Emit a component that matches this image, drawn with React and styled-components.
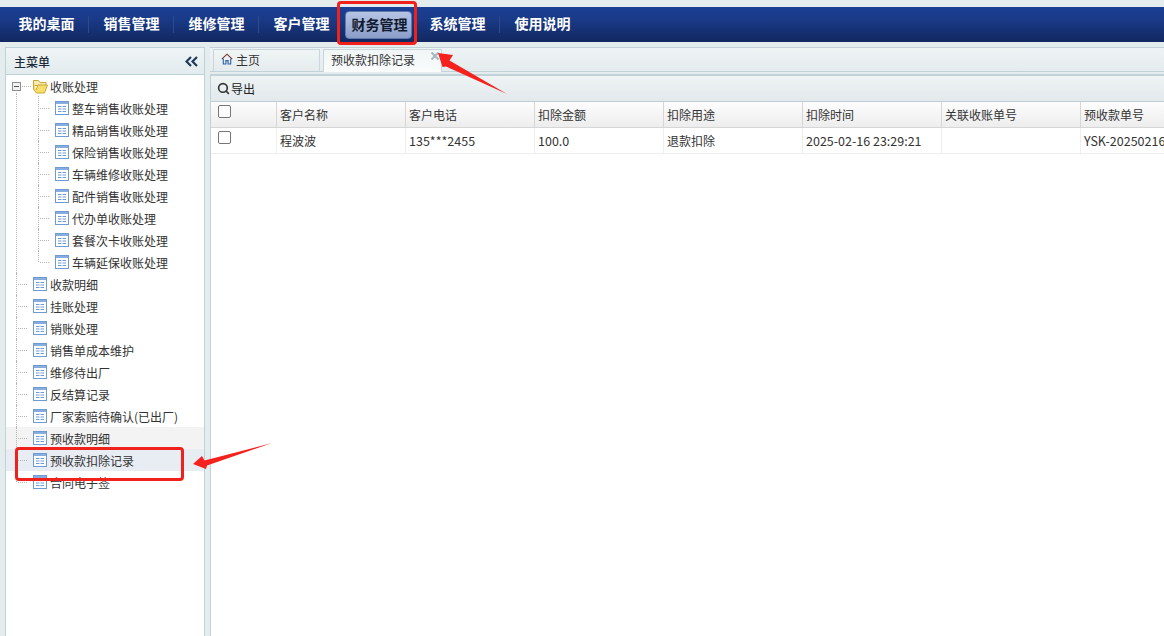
import React from 'react'
import styled, { createGlobalStyle } from 'styled-components'
import { Search } from 'lucide-react'

const NAV = ['我的桌面', '销售管理', '维修管理', '客户管理', '财务管理', '系统管理', '使用说明']
const TREE_CHILDREN = ['整车销售收账处理', '精品销售收账处理', '保险销售收账处理', '车辆维修收账处理', '配件销售收账处理', '代办单收账处理', '套餐次卡收账处理', '车辆延保收账处理']
const TREE_ITEMS = ['收款明细', '挂账处理', '销账处理', '销售单成本维护', '维修待出厂', '反结算记录', '厂家索赔待确认(已出厂)', '预收款明细', '预收款扣除记录', '合同电子签']
const COLUMNS = [
  { title: '客户名称', value: '程波波', width: 129 },
  { title: '客户电话', value: '135***2455', width: 129, latin: true },
  { title: '扣除金额', value: '100.0', width: 129, latin: true },
  { title: '扣除用途', value: '退款扣除', width: 139 },
  { title: '扣除时间', value: '2025-02-16 23:29:21', width: 139, latin: true },
  { title: '关联收账单号', value: '', width: 139 },
  { title: '预收款单号', value: 'YSK-20250216', width: 100, latin: true },
]

const TableIcon = () => (
  <svg width="14" height="14" viewBox="0 0 14 14">
    <rect x="0.5" y="0.5" width="13" height="13" fill="#fff" stroke="#6f9bd4" />
    <rect x="1" y="1" width="12" height="2" fill="#86ace0" />
    <path d="M3 5.5h8M3 8h8M3 10.5h8" stroke="#6f9bd4" />
    <path d="M7 4v8" stroke="#fff" />
  </svg>
)

const FolderIcon = () => (
  <svg width="15" height="15" viewBox="0 0 15 15">
    <path d="M0.5 1.5h5l1.5 2h6v3h-12.500z" fill="#f8eab0" stroke="#c9a63a" />
    <path d="M0.500 1.500v9l3 3.500h8l3-8h-9.500l-2 5" fill="#fbdd6a" stroke="#c9a63a" strokeLinejoin="round" />
  </svg>
)

const HomeIcon = () => (
  <svg width="12" height="12" viewBox="0 0 12 12" fill="none">
    <path d="M0.8 6.200 6 1.200l5.200 5" stroke="#7a2f2f" strokeWidth="1.100" />
    <path d="M2.300 5.500v5.500h2.600V7.600h2.200V11h2.600V5.500" stroke="#2a62a8" strokeWidth="1.100" />
  </svg>
)

const App = () => (
  <Page>
    <GlobalStyle />
    <NavBar>
      {NAV.map(name => (
        <NavItem
          key={name}
          $active={name === '财务管理'}
          $divider={['我的桌面', '销售管理', '维修管理', '系统管理'].includes(name)}
        >
          {name}
        </NavItem>
      ))}
    </NavBar>
    <Body>
      <Sidebar>
        <SideTitle>
          主菜单
          <svg width="13" height="11" viewBox="0 0 13 11" fill="none" stroke="#1f3a5c" strokeWidth="2.200">
            <path d="M6 1 1.500 5.500 6 10M12 1 7.500 5.500 12 10" />
          </svg>
        </SideTitle>
        <Tree>
          <TreeRow $root>
            <Toggle />
            <FolderIcon />
            <TreeLabel $gap={2}>收账处理</TreeLabel>
          </TreeRow>
          <ChildGroup>
            {TREE_CHILDREN.map((name, i) => (
              <TreeRow key={name} $child $first={i === 0} $last={i === TREE_CHILDREN.length - 1}>
                <TableIcon />
                <TreeLabel>{name}</TreeLabel>
              </TreeRow>
            ))}
          </ChildGroup>
          {TREE_ITEMS.map((name, i) => (
            <TreeRow
              key={name}
              $last={i === TREE_ITEMS.length - 1}
              $hover={name === '预收款明细'}
              $selected={name === '预收款扣除记录'}
            >
              <TableIcon />
              <TreeLabel>{name}</TreeLabel>
            </TreeRow>
          ))}
        </Tree>
      </Sidebar>
      <Main>
        <TabBar>
          <Tab $width={107}><HomeIcon />主页</Tab>
          <Tab $width={119} $active>
            预收款扣除记录
            <TabClose width="8" height="8" viewBox="0 0 8 8">
              <path d="M0.500 0.500 7.500 7.500M7.500 0.500 0.500 7.500" stroke="#a3b7c3" strokeWidth="2" />
            </TabClose>
          </Tab>
        </TabBar>
        <Content>
          <Toolbar>
            <Search size={13} strokeWidth={3} color="#333" />
            导出
          </Toolbar>
          <GridRow $head>
            <CheckCell $head><Check /></CheckCell>
            {COLUMNS.map(c => <Cell key={c.title} $head $width={c.width}>{c.title}</Cell>)}
          </GridRow>
          <GridRow>
            <CheckCell><Check /></CheckCell>
            {COLUMNS.map(c => <Cell key={c.title} $width={c.width} $latin={c.latin}>{c.value}</Cell>)}
          </GridRow>
        </Content>
      </Main>
    </Body>
    <NavMark />
    <TreeMark />
    <Arrows width="1164" height="636" viewBox="0 0 1164 636">
      <path d="M438 53 453 55 449.500 60.500 507 94 446 66.500 442.500 67Z" fill="#f4211c" />
      <path d="M193 464 202 456 204.500 460.500 272 443 207 465.500 206 469Z" fill="#f4211c" />
    </Arrows>
  </Page>
)

export default App

const GlobalStyle = createGlobalStyle`
  html, body {
    margin: 0;
    padding: 0;
    background: #fff;
  }
  body {
    font-family: "Noto Sans CJK SC", "Noto Sans", sans-serif;
    font-size: 12px;
    color: #222;
  }
`

const Page = styled.div`
  position: relative;
  width: 1164px;
  height: 636px;
  overflow: hidden;
  background: #e5ecee;
  padding-top: 7px;
  box-sizing: border-box;
  display: flex;
  flex-direction: column;
`

const NavBar = styled.div`
  height: 35px;
  flex: none;
  display: flex;
  align-items: center;
  padding-left: 4px;
  background: linear-gradient(#1b3f95 0%, #1a3a88 35%, #11285f 100%);
`

const NavItem = styled.div`
  width: 85px;
  box-sizing: border-box;
  height: 29px;
  line-height: 27px;
  text-align: center;
  font-size: 14px;
  font-weight: 700;
  color: #fff;
  position: relative;
  ${p => p.$active && `
    width: 67px;
    height: 28px;
    line-height: 25px;
    padding-left: 2px;
    margin: 0 3px 0 1px;
    color: #111a2e;
    border-radius: 4px;
    background: linear-gradient(#b6c4e3, #8a9dc9);
    border: 1px solid #5f78b0;
  `}
  ${p => p.$divider && `
    &::after {
      content: '';
      position: absolute;
      right: 0;
      top: 6px;
      bottom: 6px;
      width: 1px;
      background: #2f4a8c;
    }
  `}
`

const Body = styled.div`
  flex: 1;
  display: flex;
  min-height: 0;
  padding: 5px 0 0 5px;
`

const Sidebar = styled.div`
  width: 200px;
  flex: none;
  box-sizing: border-box;
  display: flex;
  flex-direction: column;
  background: #fff;
  border: 1px solid #bdd2d9;
  border-bottom: 0;
`

const SideTitle = styled.div`
  height: 27px;
  flex: none;
  box-sizing: border-box;
  display: flex;
  align-items: center;
  justify-content: space-between;
  padding: 0 6px 0 8px;
  font-size: 12px;
  font-weight: 500;
  color: #1c2c3a;
  background: linear-gradient(#f0f5f6, #e3ebee);
  border-bottom: 1px solid #bdd2d9;
`

const Tree = styled.div`
  flex: 1;
`

const ChildGroup = styled.div`
  position: relative;

  &::before {
    content: '';
    position: absolute;
    left: 10px;
    top: -4px;
    bottom: 0;
    border-left: 1px dotted #b5b5b5;
  }
`

const TreeRow = styled.div`
  position: relative;
  height: 22px;
  display: flex;
  align-items: center;
  box-sizing: border-box;
  padding-left: ${p => (p.$child ? '49px' : '27px')};
  background: ${p => (p.$selected ? '#e8ecf3' : p.$hover ? '#f3f3f3' : 'transparent')};

  &::before {
    content: '';
    position: absolute;
    left: ${p => (p.$child ? '32px' : '10px')};
    top: ${p => (p.$first ? '-1px' : '0')};
    bottom: ${p => (p.$last ? '11px' : '0')};
    border-left: 1px dotted #b5b5b5;
    display: ${p => (p.$root ? 'none' : 'block')};
  }
  &::after {
    content: '';
    position: absolute;
    left: ${p => (p.$child ? '34px' : p.$root ? '16px' : '12px')};
    top: 11px;
    width: 9px;
    border-top: 1px dotted #b5b5b5;
  }
`

const Toggle = styled.span`
  position: absolute;
  z-index: 1;
  left: 6px;
  top: 7px;
  width: 9px;
  height: 9px;
  box-sizing: border-box;
  border: 1px solid #8c8c8c;
  background: linear-gradient(#555, #555) center / 5px 1px no-repeat, #f2f2f2;
`

const TreeLabel = styled.span`
  color: #333;
  font-size: 12px;
  white-space: nowrap;
  margin-left: ${p => p.$gap ?? 3}px;
`

const Main = styled.div`
  flex: 1;
  min-width: 0;
  margin-left: 5px;
  display: flex;
  flex-direction: column;
`

const TabBar = styled.div`
  height: 25px;
  flex: none;
  box-sizing: border-box;
  display: flex;
  gap: 3px;
  padding: 1px 0 0 3px;
  background: linear-gradient(#eef3f4, #e5ecee);
  border-top: 1px solid #c1d3d9;
  border-bottom: 1px solid #c1d3d9;
`

const Tab = styled.div`
  position: relative;
  width: ${p => p.$width}px;
  height: ${p => (p.$active ? '23px' : '22px')};
  box-sizing: border-box;
  display: flex;
  align-items: center;
  gap: 3px;
  padding: 0 0 3px 7px;
  color: #333;
  border: 1px solid #c9d6db;
  border-bottom: 0;
  background: ${p => (p.$active ? 'linear-gradient(#f0f5f6, #fafcfc)' : 'linear-gradient(#f0f4f5, #e5ecee)')};
`

const TabClose = styled.svg`
  position: absolute;
  right: 2px;
  top: 2px;
`

const Content = styled.div`
  flex: 1;
  background: #fff;
  margin-top: 2px;
  border-top: 2px solid #c1d3d9;
  border-left: 1px solid #c1d3d9;
`

const Toolbar = styled.div`
  height: 26px;
  box-sizing: border-box;
  display: flex;
  align-items: center;
  gap: 1px;
  padding: 0 0 1px 6px;
  font-size: 12px;
  color: #222;
  background: linear-gradient(#eff3f4, #e2e9ec);
  border-bottom: 1px solid #bfced4;
`

const GridRow = styled.div`
  display: flex;
  height: 26px;
  box-sizing: border-box;
  border-bottom: 1px solid ${p => (p.$head ? '#d6d6d6' : '#eee')};
  background: ${p => (p.$head ? 'linear-gradient(#fdfdfd, #ededed)' : '#fff')};
`

const Cell = styled.div`
  width: ${p => p.$width}px;
  flex: none;
  box-sizing: border-box;
  padding-left: 3px;
  line-height: 25px;
  font-size: ${p => (p.$latin ? '12.5px' : '12px')};
  color: #333;
  white-space: nowrap;
  overflow: hidden;
  border-right: 1px solid ${p => (p.$head ? '#d6d6d6' : '#eee')};
`

const CheckCell = styled(Cell)`
  width: 66px;
  padding: 3px 0 0 7px;
`

const Check = styled.span`
  display: block;
  width: 13px;
  height: 13px;
  box-sizing: border-box;
  background: #fff;
  border: 1px solid #767676;
  border-radius: 2px;
`

const NavMark = styled.div`
  position: absolute;
  left: 337px;
  top: 1px;
  width: 80px;
  height: 44px;
  box-sizing: border-box;
  border: 3px solid #f0201b;
  border-radius: 4px;
`

const TreeMark = styled.div`
  position: absolute;
  left: 15px;
  top: 447px;
  width: 169px;
  height: 34px;
  box-sizing: border-box;
  border: 3px solid #f0201b;
  border-radius: 4px;
`

const Arrows = styled.svg`
  position: absolute;
  left: 0;
  top: 0;
  pointer-events: none;
`
